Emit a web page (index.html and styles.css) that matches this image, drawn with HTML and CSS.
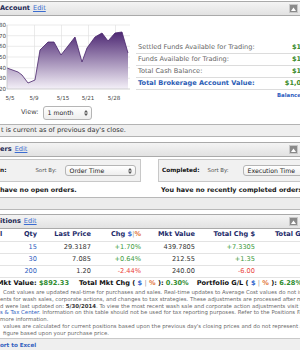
FILE: index.html
```html
<!DOCTYPE html>
<html lang="en">
<head>
    <meta charset="UTF-8">
    <meta name="viewport" content="width=device-width, initial-scale=1.0">
    <title>Account Overview</title>
    <link rel="stylesheet" href="styles.css">
</head>
<body>
    <div class="page">
        <section class="panel">
            <div class="panel-head">
                <span class="panel-title">Account</span>
                <a class="edit" href="#">Edit</a>
                <span class="toggle"><svg width="5" height="4" viewBox="0 0 5 4"><path d="M0 4 L2.5 0.5 L5 4 Z" fill="#fff"/></svg></span>
            </div>
            <div class="account-body">
                <div class="chart-col">
                    <svg class="chart" width="136" height="88" viewBox="0 16 136 88">
                        <defs>
                            <linearGradient id="area" x1="0" y1="0" x2="0" y2="1">
                                <stop offset="0" stop-color="#4d2873"/>
                                <stop offset="1" stop-color="#f4f0f8"/>
                            </linearGradient>
                        </defs>
                        <g class="grid">
                            <line x1="7" y1="25" x2="130" y2="25"/>
                            <line x1="7" y1="35.7" x2="130" y2="35.7"/>
                            <line x1="7" y1="46.3" x2="130" y2="46.3"/>
                            <line x1="7" y1="57" x2="130" y2="57"/>
                            <line x1="7" y1="67.7" x2="130" y2="67.7"/>
                            <line x1="7" y1="78.3" x2="130" y2="78.3"/>
                            <line x1="34.5" y1="25" x2="34.5" y2="89"/>
                            <line x1="61.5" y1="25" x2="61.5" y2="89"/>
                            <line x1="88.5" y1="25" x2="88.5" y2="89"/>
                            <line x1="115.5" y1="25" x2="115.5" y2="89"/>
                        </g>
                        <path class="area" d="M7 68 L18 72 L22 75 L28 83 L35 80 L40 50 L48 42 L54 42 L61 55 L75 37 L82 62 L87 48 L95 37 L102 33 L108 41 L115 33 L122 32 L128 53 L128 89 L7 89 Z"/>
                        <polyline class="line" points="7,68 18,72 22,75 28,83 35,80 40,50 48,42 54,42 61,55 75,37 82,62 87,48 95,37 102,33 108,41 115,33 122,32 128,53"/>
                        <line class="axis" x1="7" y1="25" x2="7" y2="89"/>
                        <line class="axis" x1="7" y1="89" x2="130" y2="89"/>
                        <g class="y-labels">
                            <text x="6" y="27.1">80</text>
                            <text x="6" y="37.8">70</text>
                            <text x="6" y="48.4">60</text>
                            <text x="6" y="59.1">50</text>
                            <text x="6" y="69.8">40</text>
                            <text x="6" y="80.4">30</text>
                            <text x="6" y="91.1">20</text>
                        </g>
                        <g class="x-labels">
                            <text x="10" y="100">5/5</text>
                            <text x="34" y="100">5/9</text>
                            <text x="63" y="100">5/15</text>
                            <text x="88" y="100">5/21</text>
                            <text x="114" y="100">5/28</text>
                        </g>
                    </svg>
                    <div class="view-row">
                        <span class="view-label">View:</span>
                        <span class="select view-select">1 month <svg class="arrows" width="4" height="6" viewBox="0 0 4 6"><path d="M0 2.4 L2 0 L4 2.4 Z M0 3.6 L2 6 L4 3.6 Z"/></svg></span>
                    </div>
                </div>
                <div class="funds">
                    <div class="fund-row"><span>Settled Funds Available for Trading:</span><span class="amt">$128.16</span></div>
                    <div class="fund-row"><span>Funds Available for Trading:</span><span class="amt">$128.16</span></div>
                    <div class="fund-row"><span>Total Cash Balance:</span><span class="amt">$128.16</span></div>
                    <div class="fund-row total"><span>Total Brokerage Account Value:</span><span class="amt">$1,020.49</span></div>
                    <a class="balance-link" href="#">Balances</a>
                </div>
            </div>
            <div class="panel-note">t is current as of previous day's close.</div>
        </section>

        <section class="panel">
            <div class="panel-head">
                <span class="panel-title">ers</span>
                <a class="edit" href="#">Edit</a>
                <span class="toggle"><svg width="5" height="4" viewBox="0 0 5 4"><path d="M0 4 L2.5 0.5 L5 4 Z" fill="#fff"/></svg></span>
            </div>
            <div class="orders-body">
                <div class="orders-col open">
                    <div class="sort-bar">
                        <span class="bar-label">n:</span>
                        <span class="sort-label">Sort By:</span>
                        <span class="select order-select">Order Time <svg class="arrows" width="4" height="6" viewBox="0 0 4 6"><path d="M0 2.4 L2 0 L4 2.4 Z M0 3.6 L2 6 L4 3.6 Z"/></svg></span>
                    </div>
                    <p class="empty">have no open orders.</p>
                </div>
                <div class="orders-col done">
                    <div class="sort-bar">
                        <span class="bar-label">Completed:</span>
                        <span class="sort-label">Sort By:</span>
                        <span class="select exec-select">Execution Time <svg class="arrows" width="4" height="6" viewBox="0 0 4 6"><path d="M0 2.4 L2 0 L4 2.4 Z M0 3.6 L2 6 L4 3.6 Z"/></svg></span>
                    </div>
                    <p class="empty">You have no recently completed orders.</p>
                </div>
            </div>
            <div class="panel-foot"></div>
        </section>

        <section class="panel">
            <div class="panel-head">
                <span class="panel-title">itions</span>
                <a class="edit" href="#">Edit</a>
                <span class="toggle"><svg width="5" height="4" viewBox="0 0 5 4"><path d="M0 4 L2.5 0.5 L5 4 Z" fill="#fff"/></svg></span>
            </div>
            <div class="pos-table">
                <div class="pos-row pos-headrow">
                    <span class="c-sym">l</span>
                    <span>Qty</span>
                    <span>Last Price</span>
                    <span>Chg <span class="usd">$</span><span class="sep">|</span><span class="pct">%</span></span>
                    <span>Mkt Value</span>
                    <span>Total Chg $</span>
                    <span class="c-gl">Total Gain/Loss $</span>
                </div>
                <div class="pos-row">
                    <span class="c-sym"></span>
                    <a href="#">15</a>
                    <span>29.3187</span>
                    <span class="up">+1.70%</span>
                    <span>439.7805</span>
                    <span class="up">+7.3305</span>
                    <span class="c-gl"></span>
                </div>
                <div class="pos-row">
                    <span class="c-sym"></span>
                    <a href="#">30</a>
                    <span>7.085</span>
                    <span class="up">+0.64%</span>
                    <span>212.55</span>
                    <span class="up">+1.35</span>
                    <span class="c-gl"></span>
                </div>
                <div class="pos-row">
                    <span class="c-sym"></span>
                    <a href="#">200</a>
                    <span>1.20</span>
                    <span class="down">-2.44%</span>
                    <span>240.00</span>
                    <span class="down">-6.00</span>
                    <span class="c-gl"></span>
                </div>
            </div>
            <div class="totals">
                <span class="tot first">Mkt Value: <span class="gain">$892.33</span></span>
                <span class="tot">Total Mkt Chg ( <span class="usd">$</span> <span class="sep">|</span> <span class="pct">%</span> ): <span class="gain">0.30%</span></span>
                <span class="tot">Portfolio G/L ( <span class="usd">$</span> <span class="sep">|</span> <span class="pct">%</span> ): <span class="gain">6.28%</span></span>
            </div>
            <div class="notes">
                <p>
                    <span class="indent">Cost values are updated real-time for purchases and sales. Real-time updates to Average Cost values do not include</span>
                    <span>ents for wash sales, corporate actions, and changes to tax strategies. These adjustments are processed after market close</span>
                    <span>d were last updated on: <b>5/30/2014</b>. To view the most recent wash sale and corporate action adjustments visit the</span>
                    <span><a href="#">s &amp; Tax Center</a>. Information on this table should not be used for tax reporting purposes. Refer to the Positions FAQ</span>
                    <span>more information.</span>
                </p>
                <p>
                    <span class="indent">values are calculated for current positions based upon the previous day's closing prices and do not represent a gain</span>
                    <span class="indent">figure based upon your purchase price.</span>
                </p>
            </div>
            <div class="export"><a href="#">ort to Excel</a></div>
        </section>
    </div>
</body>
</html>
```

FILE: styles.css
```css
* {
    box-sizing: border-box;
}

html,
body {
    margin: 0;
    padding: 0;
    overflow: hidden;
    background-color: #fff;
}

body {
    width: 300px;
    height: 350px;
    font-family: "DejaVu Sans", Verdana, sans-serif;
    font-size: 6.6px;
    line-height: 1.2;
    color: #333;
}

a {
    color: #2f60c0;
    text-decoration: none;
}

p {
    margin: 0;
}

.page {
    width: 300px;
    padding-top: 1px;
}

.panel {
    margin-bottom: 5px;
}

/* panel header bar */
.panel-head {
    display: flex;
    align-items: center;
    height: 15px;
    padding-right: 2px;
    border-top: 1px solid #aaa;
    border-bottom: 1px solid #aaa;
    background: linear-gradient(#f4f4f4, #e2e2e2);
}

.panel-title {
    font-weight: bold;
    color: #1c2753;
}

.edit {
    margin-left: 3px;
    color: #3b6ccf;
    text-decoration: underline;
}

.toggle {
    display: flex;
    align-items: center;
    justify-content: center;
    width: 9px;
    height: 9px;
    margin-left: auto;
    background-color: #8a8a8a;
    border: 1px solid #c9c9c9;
}

/* account */
.account-body {
    display: flex;
    height: 108px;
}

.chart-col {
    flex: none;
    width: 136px;
}

.chart {
    display: block;
}

.chart .grid line {
    stroke: #dedede;
    stroke-width: 0.6;
}

.chart .axis {
    stroke: #bdbdbd;
    stroke-width: 0.7;
}

.chart .area {
    fill: url(#area);
}

.chart .line {
    fill: none;
    stroke: #47236b;
    stroke-width: 0.8;
}

.chart text {
    font-family: "DejaVu Sans", Verdana, sans-serif;
    font-size: 5.6px;
    fill: #444;
}

.y-labels text {
    text-anchor: end;
}

.x-labels text {
    text-anchor: middle;
}

.view-row {
    display: flex;
    align-items: center;
    margin-top: 2px;
    padding-left: 21px;
}

.view-label {
    color: #444;
    margin-right: 4px;
}

.select {
    display: flex;
    align-items: center;
    justify-content: space-between;
    padding: 0 3px 0 4px;
    border: 1px solid #b5b5b5;
    border-radius: 3px;
    background: linear-gradient(#fff, #eeeeee);
    color: #222;
    font-size: 6.2px;
    white-space: nowrap;
}

.arrows path {
    fill: #555;
}

.view-select {
    width: 49px;
    height: 14px;
}

.funds {
    flex: none;
    width: 186px;
    padding-top: 26px;
}

.fund-row {
    display: flex;
    justify-content: space-between;
    align-items: center;
    height: 12px;
    padding-left: 2px;
    border-bottom: 1px solid #dcdcdc;
    color: #666;
    white-space: nowrap;
}

.fund-row .amt {
    font-weight: bold;
    color: #3a8a2a;
}

.fund-row.total span:first-child {
    font-weight: bold;
    color: #2c5db5;
}

.balance-link {
    display: block;
    margin: 2px 0 0 141px;
    font-size: 5.4px;
    font-weight: bold;
}

.panel-note {
    height: 13px;
    padding-left: 1px;
    border-top: 1px solid #b3b3b3;
    border-bottom: 1px solid #b3b3b3;
    background-color: #efefef;
    line-height: 11px;
    white-space: nowrap;
}

/* orders */
.orders-body {
    display: flex;
    padding: 2px 0 1px;
}

.orders-col.open {
    flex: none;
    width: 141px;
}

.orders-col.done {
    flex: none;
    width: 170px;
    margin-left: 17px;
}

.sort-bar {
    display: flex;
    align-items: center;
    height: 23px;
    border: 1px solid #c8c8c8;
    background-color: #f1f1f1;
    white-space: nowrap;
}

.open .sort-bar {
    border-left: none;
}

.done .sort-bar {
    padding-left: 3px;
}

.bar-label {
    font-size: 5.8px;
    font-weight: bold;
    color: #111;
}

.sort-label {
    font-size: 5.4px;
    color: #555;
}

.open .sort-label {
    margin-left: 29px;
}

.done .sort-label {
    margin-left: 8px;
}

.order-select {
    width: 71px;
    height: 11px;
    margin-left: 8px;
}

.exec-select {
    width: 80px;
    height: 11px;
    margin-left: 14px;
}

.empty {
    height: 11px;
    margin-top: 3px;
    font-size: 6.4px;
    font-weight: bold;
    line-height: 11px;
    color: #151515;
    white-space: nowrap;
}

.done .empty {
    padding-left: 3px;
}

.panel-foot {
    height: 13px;
    border-top: 1px solid #b8b8b8;
    border-bottom: 1px solid #b8b8b8;
    background-color: #ececec;
}

.panel-foot + .panel-foot,
.panel:nth-child(2) {
    margin-bottom: 4px;
}

/* positions */
.pos-row {
    display: grid;
    grid-template-columns: 6px 31px 54px 50px 54px 60px 1fr;
    align-items: center;
    height: 12px;
    border-bottom: 1px solid #e3e3e3;
    white-space: nowrap;
}

.pos-row > * {
    text-align: right;
}

.pos-row .c-sym {
    text-align: left;
}

.pos-row .c-gl {
    text-align: left;
    padding-left: 20px;
}

.pos-headrow {
    height: 13px;
    font-weight: bold;
    color: #1d2b6a;
}

.usd {
    color: #3366cc;
}

.sep {
    color: #999;
    font-weight: normal;
}

.pct {
    color: #e2763a;
}

.up {
    color: #3c9a3c;
}

.down {
    color: #ea3f3a;
}

.totals {
    display: flex;
    align-items: center;
    height: 11px;
    font-weight: bold;
    color: #111;
    white-space: nowrap;
}

.tot {
    margin-right: 8px;
}

.tot.first {
    margin-left: -3px;
    margin-right: 10px;
}

.gain {
    color: #2f8c2f;
}

.notes {
    font-size: 5.4px;
    line-height: 6.8px;
    color: #6a6a6a;
}

.notes span {
    display: block;
    white-space: nowrap;
}

.notes .indent {
    padding-left: 3px;
}

.notes b {
    color: #333;
}

.export {
    height: 14px;
    margin-top: 1px;
    border-top: 1px solid #c9c9c9;
    background-color: #efefef;
    line-height: 12px;
}

.export a {
    font-size: 5.6px;
    font-weight: bold;
}
```
